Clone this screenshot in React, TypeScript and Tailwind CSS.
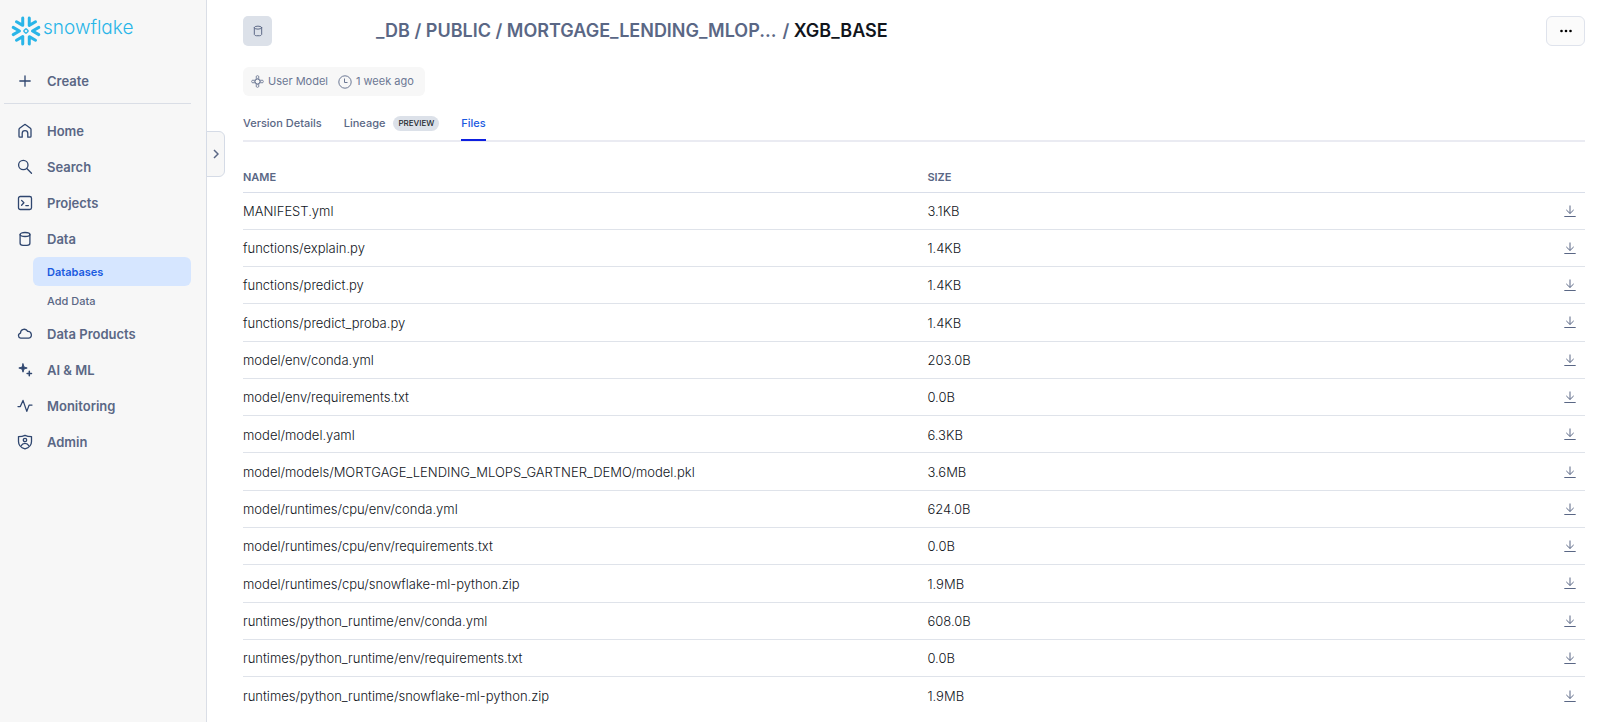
import type { ReactNode } from "react";

const files: [string, string][] = [
  ["MANIFEST.yml", "3.1KB"],
  ["functions/explain.py", "1.4KB"],
  ["functions/predict.py", "1.4KB"],
  ["functions/predict_proba.py", "1.4KB"],
  ["model/env/conda.yml", "203.0B"],
  ["model/env/requirements.txt", "0.0B"],
  ["model/model.yaml", "6.3KB"],
  ["model/models/MORTGAGE_LENDING_MLOPS_GARTNER_DEMO/model.pkl", "3.6MB"],
  ["model/runtimes/cpu/env/conda.yml", "624.0B"],
  ["model/runtimes/cpu/env/requirements.txt", "0.0B"],
  ["model/runtimes/cpu/snowflake-ml-python.zip", "1.9MB"],
  ["runtimes/python_runtime/env/conda.yml", "608.0B"],
  ["runtimes/python_runtime/env/requirements.txt", "0.0B"],
  ["runtimes/python_runtime/snowflake-ml-python.zip", "1.9MB"],
];

function Icon({ children, className = "size-4" }: { children: ReactNode; className?: string }) {
  return (
    <svg
      viewBox="0 0 16 16"
      className={className}
      fill="none"
      stroke="currentColor"
      strokeWidth="1.3"
      strokeLinecap="round"
      strokeLinejoin="round"
      aria-hidden="true"
    >
      {children}
    </svg>
  );
}

const plus = <path d="M8 2.8v10.4M2.8 8h10.4" />;
const home = (
  <path d="M2 6.400a1.600 1.600 0 0 1 .6-1.200L7 1.900a1.600 1.600 0 0 1 2 0l4.400 3.300a1.600 1.600 0 0 1 .6 1.200V13.300a.9.900 0 0 1-.9.900h-2.300V10.400a2.800 2.800 0 0 0-5.600 0v3.800H2.900a.9.900 0 0 1-.9-.9z" />
);
const search = (
  <>
    <circle cx="6.300" cy="6" r="4.700" />
    <path d="m9.800 9.500 4.700 4.700" />
  </>
);
const projects = (
  <>
    <rect x="1.500" y="1.500" width="13" height="13" rx="1.800" />
    <path d="m4.600 5.400 2.300 2.400-2.300 2.400M8.800 10.600h2.600" />
  </>
);
const cylinder = (
  <>
    <ellipse cx="8" cy="3.500" rx="4.900" ry="2" />
    <path d="M3.100 3.500v8.800c0 1.100 1.300 2 2.900 2h4c1.600 0 2.900-.9 2.900-2V3.500" />
  </>
);
const cloud = (
  <path d="M3.700 12.200a2.600 2.600 0 0 1-.2-5.100A3.800 3.800 0 0 1 10.700 5.400a3.450 3.450 0 0 1 1 6.800z" />
);
const sparkle = (
  <g fill="currentColor">
    <path d="M6 1.800 7 5l3.200 1L7 7 6 10.200 5 7 1.800 6 5 5z" strokeWidth="0.9" />
    <path d="M12.300 9.300v4.400M10.100 11.500h4.400" strokeWidth="1.500" />
  </g>
);
const pulse = <path d="M1 8.600h2.300L6 2.400l3.800 11 2.300-6.300H15" />;
const shield = (
  <>
    <path d="M8 1.300c2 1 4.200 1.300 6.500 1.300v4.800c0 3.600-2.600 6.200-6.500 7.400-3.900-1.200-6.500-3.800-6.500-7.400V2.600C3.800 2.600 6 2.300 8 1.300z" />
    <circle cx="8" cy="6" r="1.700" />
    <path d="M4.400 11.600c.6-1.500 1.900-2.200 3.600-2.200s3 .7 3.600 2.200" />
  </>
);

const spokes = [0, 60, 120, 180, 240, 300];

function SnowflakeMark() {
  return (
    <svg viewBox="-15 -15 30 30" className="size-[30px]" fill="none" stroke="currentColor" aria-hidden="true">
      {spokes.map((angle) => (
        <path
          key={angle}
          d="M-12.800 -3.600 -6.500 0 -12.800 3.600"
          strokeWidth="3"
          strokeLinecap="round"
          strokeLinejoin="round"
          transform={`rotate(${angle})`}
        />
      ))}
      <rect x="-1.700" y="-1.700" width="3.400" height="3.400" rx="0.600" strokeWidth="1.300" transform="rotate(45)" />
    </svg>
  );
}

function NavItem({ icon, label }: { icon: ReactNode; label: string }) {
  return (
    <a href="#" className="flex h-9 items-center gap-[14px] pl-[17px] text-[13px] font-semibold text-[#5a6785]">
      <span className="text-[#2f466f]">
        <Icon>{icon}</Icon>
      </span>
      <span className="pt-[2px]">{label}</span>
    </a>
  );
}

function Sidebar() {
  return (
    <aside className="flex w-[207px] shrink-0 flex-col border-r border-[#dadee6] bg-[#f7f7f7]">
      <a href="#" className="flex h-[61px] items-center gap-[2px] pl-[11px] text-[#29b5e8]">
        <SnowflakeMark />
        <span className="pb-1 text-[19px] font-light [font-feature-settings:'cv11']">snowflake</span>
      </a>
      <button type="button" className="mt-[2px] flex h-9 items-center gap-[14px] pl-[17px] text-[13px] font-semibold text-[#5a6785]">
        <span className="text-[#2f466f]">
          <Icon>{plus}</Icon>
        </span>
        <span className="pt-[2px]">Create</span>
      </button>
      <hr className="mr-[15px] ml-1 mt-1 mb-[9px] border-[#dadee6]" />
      <nav>
        <NavItem icon={home} label="Home" />
        <NavItem icon={search} label="Search" />
        <NavItem icon={projects} label="Projects" />
        <NavItem icon={cylinder} label="Data" />
        <div className="mr-[15px] ml-[33px] pb-px text-[11px]">
          <a href="#" aria-current="page" className="flex h-[29px] items-center rounded-md bg-[#d6e6ff] pt-px pl-[14px] font-semibold text-[#1a5ae0]">
            Databases
          </a>
          <a href="#" className="flex h-[29px] items-center pt-px pl-[14px] font-medium text-[#5a6785]">
            Add Data
          </a>
        </div>
        <NavItem icon={cloud} label="Data Products" />
        <NavItem icon={sparkle} label="AI & ML" />
        <NavItem icon={pulse} label="Monitoring" />
        <NavItem icon={shield} label="Admin" />
      </nav>
    </aside>
  );
}

function Header() {
  return (
    <header>
      <div className="flex items-center">
        <span className="flex h-[30px] w-[29px] items-center justify-center rounded-[5px] bg-[#dce1e9] text-[#5a6785]">
          <Icon className="size-3">{cylinder}</Icon>
        </span>
        <h1 className="ml-26 flex gap-[6px] text-[18px] leading-[30px] font-semibold whitespace-nowrap text-[#5a6785]">
          <span>_DB / PUBLIC / MORTGAGE_LENDING_MLOP...</span>
          <span>
            / <span className="text-[#11151c]">XGB_BASE</span>
          </span>
        </h1>
        <button
          type="button"
          aria-label="More actions"
          className="ml-auto flex h-[30px] w-[39px] items-center justify-center rounded-md border border-[#dfe3ec] bg-[#fbfbfb] text-black"
        >
          <svg viewBox="0 0 14 4" className="h-1 w-[14px]" fill="currentColor" aria-hidden="true">
            <circle cx="2.500" cy="2" r="1.300" />
            <circle cx="7" cy="2" r="1.300" />
            <circle cx="11.500" cy="2" r="1.300" />
          </svg>
        </button>
      </div>
      <div className="mt-[21px] inline-flex h-[29px] items-center gap-[10px] rounded-md bg-[#f7f7f7] pr-[11px] pl-2 text-[11px] text-[#6c7894]">
        <span className="flex items-center gap-1">
          <svg viewBox="0 0 14 14" className="size-[13px]" fill="none" stroke="currentColor" strokeWidth="0.9" aria-hidden="true">
            <circle cx="7" cy="2.200" r="1.500" />
            <circle cx="7" cy="11.800" r="1.500" />
            <circle cx="2.200" cy="7" r="1.500" />
            <circle cx="11.800" cy="7" r="1.500" />
            <path d="M5.800 3.200 5.200 5.200 3.200 5.800M8.200 3.200l.6 2 2 .6M5.800 10.800l-.6-2-2-.6M8.200 10.800l.6-2 2-.6" />
            <circle cx="7" cy="7" r="2.500" />
          </svg>
          User Model
        </span>
        <span className="flex items-center gap-1">
          <svg viewBox="0 0 14 14" className="size-[14px]" fill="none" stroke="currentColor" aria-hidden="true">
            <circle cx="7" cy="7" r="6.200" />
            <path d="M6.500 3.500V7.500h3" />
          </svg>
          1 week ago
        </span>
      </div>
    </header>
  );
}

function Tabs() {
  return (
    <nav className="mt-[13px] flex border-b-2 border-[#eaebf2] text-[11px] font-medium text-[#5a6785]">
      <a href="#" className="mr-[22px] flex h-[31px] items-center pb-[2px]">Version Details</a>
      <a href="#" className="mr-[22px] flex h-[31px] items-center gap-2 pb-[2px]">
        Lineage
        <span className="rounded-full bg-[#dce1e9] px-[5px] text-[8px] leading-[15px] text-[#22262e]">PREVIEW</span>
      </a>
      <a href="#" aria-current="page" className="-mb-px flex h-8 items-center border-b-2 border-[#0d1fe0] pb-px text-[#1a5ae0]">
        Files
      </a>
    </nav>
  );
}

function FilesTable() {
  return (
    <table className="mt-5 w-full flex-1 table-fixed border-collapse text-left text-[13px] font-light text-[#11151c]">
      <thead>
        <tr className="h-[30px] border-b border-[#d9dee9] text-[11px] text-[#5a6785]">
          <th className="w-[51%] font-semibold">NAME</th>
          <th className="font-semibold">SIZE</th>
          <th className="w-20" aria-label="Download" />
        </tr>
      </thead>
      <tbody>
        {files.map(([name, size]) => (
          <tr key={name} className="h-[37px] border-b border-[#dfe3ea] last:border-b-0">
            <td className="pt-[2px]">{name}</td>
            <td className="pt-[2px]">{size}</td>
            <td>
              <button type="button" aria-label={"Download " + name} className="mr-[9px] ml-auto block text-[#5a6785]">
                <svg viewBox="0 0 12 12" className="size-3" fill="none" stroke="currentColor" aria-hidden="true">
                  <path d="M6 0.500v7.800M2.300 4.900 6 8.500l3.700-3.600M0.300 11.500h11.400" />
                </svg>
              </button>
            </td>
          </tr>
        ))}
      </tbody>
    </table>
  );
}

export default function App() {
  return (
    <div className="flex min-h-screen bg-white font-['Inter',sans-serif] antialiased">
      <Sidebar />
      <button
        type="button"
        aria-label="Expand panel"
        className="-ml-px mt-[131px] flex h-[46px] w-[19px] shrink-0 items-center justify-center self-start rounded-r-md border border-[#d5dbe6] bg-[#f7f7f7] text-[#5a6785]"
      >
        <svg viewBox="0 0 6 10" className="h-[10px] w-[6px]" fill="none" stroke="currentColor" strokeWidth="1.500" aria-hidden="true">
          <path d="m1 1 4 4-4 4" />
        </svg>
      </button>
      <main className="flex min-w-0 flex-1 flex-col pt-4 pr-[15px] pb-2 pl-[18px]">
        <Header />
        <Tabs />
        <FilesTable />
      </main>
    </div>
  );
}
